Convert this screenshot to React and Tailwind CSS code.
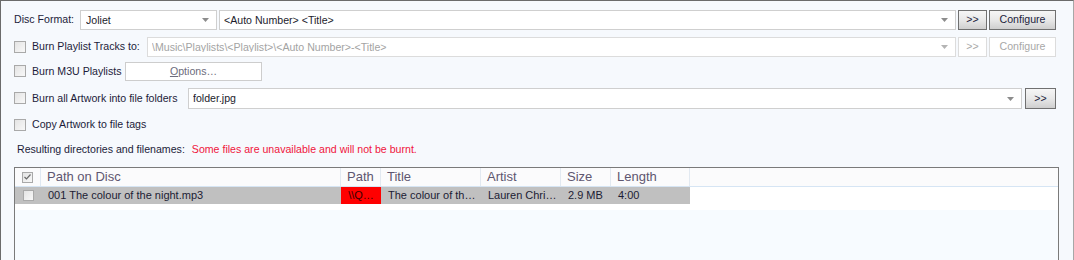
import React from 'react';

const Arrow = ({ dim }) => (
  <svg width="7" height="4" viewBox="0 0 7 4" className="shrink-0">
    <path d="M0 0h7L3.5 4z" fill={dim ? '#b4b4b4' : '#8c8c8c'} />
  </svg>
);

const Combo = ({ value, className = '', disabled, arrow = true }) => (
  <div
    className={`flex items-center h-[20px] bg-white border pl-[4px] pr-[7px] ${
      disabled ? 'border-[#dcdcdc] text-[#a3a3a3]' : 'border-[#cfcfcf] text-[#1c1c2c]'
    } ${className}`}
  >
    <span className="flex-1 truncate leading-none">{value}</span>
    {arrow && <Arrow dim={disabled} />}
  </div>
);

const Btn = ({ children, className = '', disabled }) => (
  <div
    className={`flex items-center justify-center h-[20px] ${
      disabled
        ? 'border border-[#dcdcdc] bg-white text-[#a8a8a8]'
        : 'border border-[#707070] bg-gradient-to-b from-[#f6f6f6] via-[#e8e8e8] to-[#cfcfcf] text-[#1c1c3c]'
    } ${className}`}
  >
    {children}
  </div>
);

const Check = ({ small, checked }) => (
  <div
    className={`shrink-0 flex items-center justify-center border border-[#a9a9a9] bg-gradient-to-br from-[#e4e4e4] to-[#f8f8f8] ${
      small ? 'w-[11px] h-[11px]' : 'w-[12px] h-[12px]'
    }`}
  >
    {checked && (
      <svg width="7" height="6" viewBox="0 0 7 6">
        <path d="M0.5 3l2 2 4-4.5" fill="none" stroke="#6a6a6a" strokeWidth="1.2" />
      </svg>
    )}
  </div>
);

const CheckLabel = ({ label, width }) => (
  <div className="flex items-center shrink-0" style={{ width }}>
    <Check />
    <span className="ml-[6px] text-[#1c1c3a] whitespace-nowrap">{label}</span>
  </div>
);

const COLS = [
  { key: 'path', label: 'Path on Disc', w: 300 },
  { key: 'p', label: 'Path', w: 40 },
  { key: 'title', label: 'Title', w: 100 },
  { key: 'artist', label: 'Artist', w: 80 },
  { key: 'size', label: 'Size', w: 50 },
  { key: 'len', label: 'Length', w: 79 },
];

const ROW = {
  path: '001 The colour of the night.mp3',
  p: '\\\\Q…',
  title: 'The colour of th…',
  artist: 'Lauren Chri…',
  size: '2.9 MB',
  len: '4:00',
};

export default function App() {
  return (
    <div className="w-[1074px] h-[260px] overflow-hidden bg-[#f6f9fd] border-l border-t border-[#6b6b6b] border-r-[1px] border-r-[#a7a7a7] font-['Liberation_Sans',Arial,sans-serif] text-[10.6px]">
      <div className="pl-[13px] pr-[17px]">
        {/* Disc format */}
        <div className="flex items-center mt-[9px] h-[20px]">
          <span className="w-[66px] shrink-0 text-[#1c1c3a] whitespace-nowrap">Disc Format:</span>
          <Combo value="Joliet" className="w-[137px] pl-[5px]" />
          <Combo value="<Auto Number> <Title>" className="flex-1 ml-[2px]" />
          <Btn className="w-[29px] ml-[2px]">&gt;&gt;</Btn>
          <Btn className="w-[67px] ml-[2px]">Configure</Btn>
        </div>

        {/* Playlist tracks */}
        <div className="flex items-center mt-[7px] h-[20px]">
          <CheckLabel label="Burn Playlist Tracks to:" width={133} />
          <Combo
            disabled
            value="\Music\Playlists\<Playlist>\<Auto Number>-<Title>"
            className="flex-1"
          />
          <Btn disabled className="w-[29px] ml-[2px]">&gt;&gt;</Btn>
          <Btn disabled className="w-[67px] ml-[2px]">Configure</Btn>
        </div>

        {/* M3U */}
        <div className="flex items-center mt-[5px] h-[19px]">
          <CheckLabel label="Burn M3U Playlists" width={111} />
          <div className="w-[137px] h-[19px] flex items-center justify-center bg-white border border-[#cdcdcd] text-[#6c6c7c]">
            <span><span className="underline">O</span>ptions…</span>
          </div>
        </div>

        {/* Artwork folders */}
        <div className="flex items-center mt-[7px] h-[21px]">
          <CheckLabel label="Burn all Artwork into file folders" width={174} />
          <Combo value="folder.jpg" className="flex-1 h-[21px]" />
          <Btn className="w-[31px] h-[21px] ml-[3px]">&gt;&gt;</Btn>
        </div>

        {/* Artwork tags */}
        <div className="flex items-center mt-[8px] h-[16px]">
          <CheckLabel label="Copy Artwork to file tags" width={200} />
        </div>

        {/* Result line */}
        <div className="flex items-center mt-[9px] h-[16px] pl-[3px]">
          <span className="text-[#1c1c3a] whitespace-nowrap">Resulting directories and filenames:</span>
          <span className="ml-[7px] text-[#f0153c] whitespace-nowrap">
            Some files are unavailable and will not be burnt.
          </span>
        </div>
      </div>

      {/* List view */}
      <div className="ml-[13px] mr-[14px] mt-[9px] h-[100px] border-l border-t border-r border-[#7a7a7a] bg-[#f7fbff]">
        <div className="flex h-[19px] bg-[#fbfbfc] border-b border-[#d6e5f4]">
          <div className="w-[26px] flex items-center justify-center border-r border-[#dfe8f2]">
            <Check small checked />
          </div>
          {COLS.map(c => (
            <div
              key={c.key}
              className="flex items-center pl-[6px] border-r border-[#e2e9f1] text-[13px] text-[#5e5670] whitespace-nowrap overflow-hidden"
              style={{ width: c.w }}
            >
              {c.label}
            </div>
          ))}
        </div>
        <div className="h-[23px] bg-white">
          <div className="flex h-[17px] w-[675px] bg-[#c0c0c0] text-[11px]">
            <div className="w-[26px] flex items-center justify-center">
              <Check small />
            </div>
            {COLS.map(c => (
              <div
                key={c.key}
                className={`flex items-center whitespace-nowrap overflow-hidden ${
                  c.key === 'p' ? 'bg-[#ff0000] justify-center text-[#3a0000]' : 'pl-[7px] text-[#1c1c34]'
                }`}
                style={{ width: c.w }}
              >
                {ROW[c.key]}
              </div>
            ))}
          </div>
        </div>
      </div>
    </div>
  );
}
